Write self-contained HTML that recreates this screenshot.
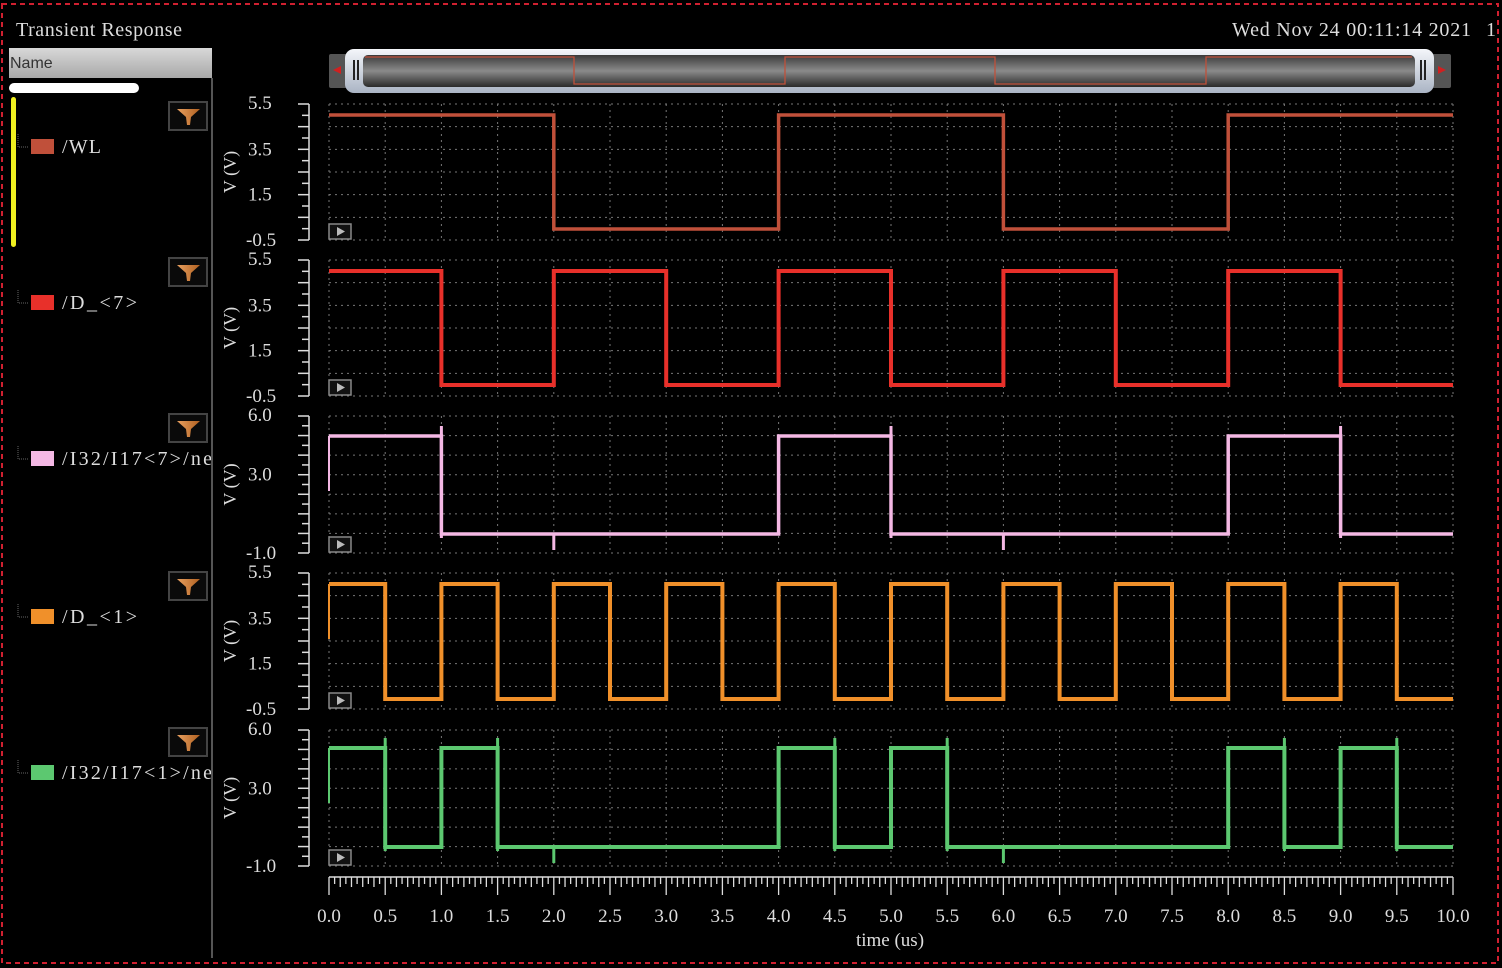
<!DOCTYPE html>
<html><head><meta charset="utf-8"><style>
html,body{margin:0;padding:0;background:#000;width:1502px;height:968px;overflow:hidden}
svg{display:block}
text{font-family:"Liberation Serif",serif;fill:#ddd}
</style></head><body>
<svg id="s" width="1502" height="968" xmlns="http://www.w3.org/2000/svg">
<defs>
<linearGradient id="hdr" x1="0" y1="0" x2="0" y2="1"><stop offset="0" stop-color="#d8d8d8"/><stop offset="1" stop-color="#a8a8a8"/></linearGradient>
<linearGradient id="sb" x1="0" y1="0" x2="0" y2="1"><stop offset="0" stop-color="#3a3a3a"/><stop offset="0.5" stop-color="#8a8a8a"/><stop offset="1" stop-color="#2a2a2a"/></linearGradient>
<linearGradient id="sbo" x1="0" y1="0" x2="0" y2="1"><stop offset="0" stop-color="#f4f6fa"/><stop offset="1" stop-color="#aab4c4"/></linearGradient>
<linearGradient id="fun" x1="0" y1="0" x2="1" y2="0"><stop offset="0" stop-color="#e8a060"/><stop offset="1" stop-color="#b06020"/></linearGradient>
<clipPath id="lc"><rect x="0" y="0" width="211" height="968"/></clipPath>
</defs>
<rect x="2" y="4" width="1496" height="959" fill="none" stroke="#d02030" stroke-width="2" stroke-dasharray="5,4"/>
<text x="16" y="36" font-size="20" textLength="166">Transient Response</text>
<text x="1232" y="36" font-size="20" textLength="239">Wed Nov 24 00:11:14 2021</text>
<text x="1486" y="36" font-size="20">1</text>
<rect x="9" y="48" width="203" height="30" fill="url(#hdr)"/>
<text x="10" y="68" font-size="16" style="font-family:'Liberation Sans',sans-serif;fill:#333">Name</text>
<rect x="211" y="78" width="2" height="880" fill="#555"/>
<rect x="9" y="83" width="130" height="10" rx="5" fill="#fff"/>
<rect x="11" y="97" width="5" height="150" rx="2.5" fill="#f0f020"/>
<g id="g"></g>
</svg>
<script>
var S=document.getElementById('g'),h='';
function X(t){return 329+t*112.4}
h+='<rect x="329" y="54" width="20" height="34" rx="2" fill="#555"/><polygon points="333,70 341,66 341,74" fill="#d02020"/>';
h+='<rect x="1432" y="54" width="19" height="34" rx="2" fill="#555"/><polygon points="1446,70 1438,66 1438,74" fill="#d02020"/>';
h+='<rect x="345" y="49" width="1089" height="44" rx="9" fill="url(#sbo)"/>';
h+='<rect x="363" y="55" width="1052" height="32" rx="5" fill="url(#sb)"/>';
h+='<rect x="353" y="60" width="2" height="20" fill="#222"/><rect x="357" y="60" width="2" height="20" fill="#222"/>';
h+='<rect x="1420" y="60" width="2" height="20" fill="#222"/><rect x="1424" y="60" width="2" height="20" fill="#222"/>';
var sp='';var xs=[365,574,785,995,1206,1412];for(var i=0;i<5;i++){sp+=(i==0?'M':'L')+xs[i]+','+(i%2?84:57)+'L'+xs[i+1]+','+(i%2?84:57);if(i<4)sp+='L'+xs[i+1]+','+(i%2?57:84);}
h+='<path d="'+sp+'" fill="none" stroke="#c0503a" stroke-width="1.3"/>';
var P=[
{top:104,bot:240,lab:[['5.5',0],['3.5',2],['1.5',4],['-0.5',6]],div:6,hi:115,lo:229,c:'#c0503a',name:'/WL',tl:39,seq:[[0,1],[2,0],[4,1],[6,0],[8,1]],sw:3.5},
{top:260,bot:396,lab:[['5.5',0],['3.5',2],['1.5',4],['-0.5',6]],div:6,hi:271,lo:385,c:'#e8302a',name:'/D_<7>',tl:75,seq:[],sw:4},
{top:416,bot:553,lab:[['6.0',0],['3.0',3],['-1.0',7]],div:7,hi:436,lo:534,c:'#f4b8e4',name:'/I32/I17<7>/ne',tl:150,seq:[[0,1],[1,0],[4,1],[5,0],[8,1],[9,0]],sw:3.5,up:[1,5,9],dn:[2,6]},
{top:573,bot:709,lab:[['5.5',0],['3.5',2],['1.5',4],['-0.5',6]],div:6,hi:584,lo:699,c:'#f0902a',name:'/D_<1>',tl:75,seq:[],sw:4},
{top:730,bot:866,lab:[['6.0',0],['3.0',3],['-1.0',7]],div:7,hi:748,lo:847,c:'#5cc870',name:'/I32/I17<1>/ne',tl:150,seq:[[0,1],[0.5,0],[1,1],[1.5,0],[4,1],[4.5,0],[5,1],[5.5,0],[8,1],[8.5,0],[9,1],[9.5,0]],sw:4,up:[0.5,1.5,4.5,5.5,8.5,9.5],dn:[2,6]}];
for(var t=0;t<10;t++)P[1].seq.push([t,t%2?0:1]);
for(var t=0;t<20;t++)P[3].seq.push([t/2,t%2?0:1]);
P.forEach(function(p,k){
 var bt=p.top,bb=p.bot,H=bb-bt;
 for(var i=0;i<=p.div;i++){var y=bt+H*i/p.div;h+='<line x1="329" x2="1453" y1="'+y+'" y2="'+y+'" stroke="#777" stroke-width="1" stroke-dasharray="2,4"/>';}
 for(var i=0;i<=20;i++){var x=X(i/2);h+='<line x1="'+x+'" x2="'+x+'" y1="'+bt+'" y2="'+bb+'" stroke="#777" stroke-width="1" stroke-dasharray="2,4"/>';}
 h+='<line x1="309" x2="309" y1="'+bt+'" y2="'+bb+'" stroke="#ddd" stroke-width="1.5"/>';
 var nt=p.div*2;for(var i=0;i<=nt;i++){var y=bt+H*i/nt;h+='<line x1="'+(i%2?302:298)+'" x2="309" y1="'+y+'" y2="'+y+'" stroke="#ddd" stroke-width="1.5"/>';}
 p.lab.forEach(function(l,i){var y=bt+H*l[1]/p.div+(l[1]==0?5:6);h+='<text x="'+(l[0][0]=='-'?246:248)+'" y="'+y+'" font-size="19">'+l[0]+'</text>';});
 var cy=(bt+bb)/2;h+='<text transform="translate(236,'+cy+') rotate(-90)" text-anchor="middle" font-size="18">V (V)</text>';
 h+='<rect x="329" y="'+(bb-16)+'" width="22" height="15" fill="#111" stroke="#888" stroke-width="1.5"/><polygon points="337,'+(bb-13)+' 337,'+(bb-4)+' 345,'+(bb-8.5)+'" fill="#bbb"/>';
 var d='',prev=null;p.seq.forEach(function(s,i){var x=X(s[0]),y=s[1]?p.hi:p.lo;if(i==0)d='M'+x+','+y;else d+='L'+x+','+(prev?p.hi:p.lo)+'L'+x+','+y;prev=s[1];});
 d+='L'+X(10)+','+(prev?p.hi:p.lo);
 h+='<path d="'+d+'" fill="none" stroke="'+p.c+'" stroke-width="'+p.sw+'"/>';
 (p.up||[]).forEach(function(t){h+='<line x1="'+X(t)+'" x2="'+X(t)+'" y1="'+(p.hi-10)+'" y2="'+(p.lo+4)+'" stroke="'+p.c+'" stroke-width="3"/>';});
 (p.dn||[]).forEach(function(t){h+='<line x1="'+X(t)+'" x2="'+X(t)+'" y1="'+p.lo+'" y2="'+(p.lo+16)+'" stroke="'+p.c+'" stroke-width="3"/>';});
 if(k>=2){h+='<line x1="'+X(0)+'" x2="'+X(0)+'" y1="'+p.hi+'" y2="'+(p.hi+55)+'" stroke="'+p.c+'" stroke-width="2"/>';}
 var fy=[102,258,414,572,728][k],ly=[146,302,458,616,772][k];
 h+='<rect x="169" y="'+fy+'" width="38" height="28" fill="#0a0a0a" stroke="#444" stroke-width="2"/>';
 h+='<path d="M177,'+(fy+7)+' L200,'+(fy+7)+' L191,'+(fy+15)+' L190,'+(fy+23)+' L187,'+(fy+23)+' L186,'+(fy+15)+' Z" fill="url(#fun)"/>';
 h+='<path d="M18,'+(ly-12)+' L18,'+(ly+1)+' L28,'+(ly+1)+'" fill="none" stroke="#666" stroke-dasharray="1,1"/>';
 h+='<rect x="31" y="'+(ly-7)+'" width="23" height="15" fill="'+p.c+'"/>';
 h+='<text clip-path="url(#lc)" x="62" y="'+(ly+7)+'" font-size="20" textLength="'+p.tl+'" lengthAdjust="spacing">'+p.name.replace(/</g,'&lt;').replace(/>/g,'&gt;')+'</text>';
});
h+='<line x1="329" x2="1453" y1="877" y2="877" stroke="#ddd" stroke-width="1.5"/>';
for(var i=0;i<=200;i++){var x=X(i/20);var L=i%10==0?18:i%2==0?10:7;h+='<line x1="'+x+'" x2="'+x+'" y1="877" y2="'+(877+L)+'" stroke="#ddd" stroke-width="1.3"/>';}
for(var i=0;i<=20;i++){h+='<text x="'+X(i/2)+'" y="922" font-size="19" text-anchor="middle">'+(i/2).toFixed(1)+'</text>';}
h+='<text x="890" y="946" font-size="19" text-anchor="middle">time (us)</text>';
S.innerHTML=h;
</script>
</body></html>
